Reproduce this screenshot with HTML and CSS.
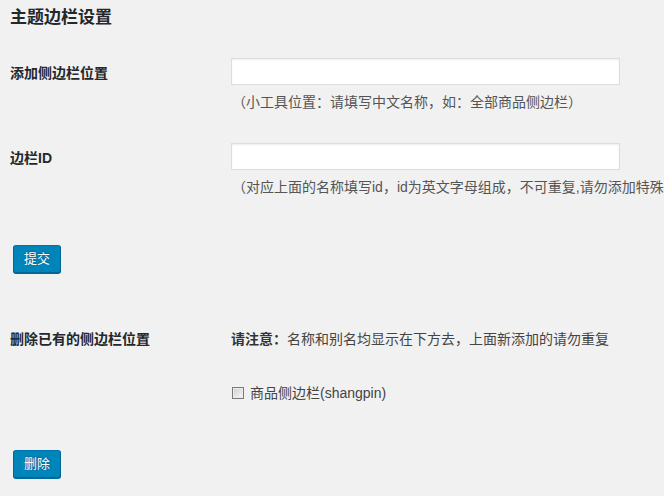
FILE: index.html
```html
<!DOCTYPE html>
<html lang="zh-CN">
<head>
<meta charset="utf-8">
<title>主题边栏设置</title>
<link rel="stylesheet" href="styles.css">
</head>
<body>
<div class="wrap">
  <h2 class="title">主题边栏设置</h2>
  <form class="form">
    <div class="row row-first">
      <div class="th">添加侧边栏位置</div>
      <div class="td">
        <input class="text-input" type="text">
        <p class="desc">（小工具位置：请填写中文名称，如：全部商品侧边栏）</p>
      </div>
    </div>
    <div class="row row-second">
      <div class="th">边栏ID</div>
      <div class="td">
        <input class="text-input" type="text">
        <p class="desc">（对应上面的名称填写id，id为英文字母组成，不可重复,请勿添加特殊字符）</p>
      </div>
    </div>
    <div class="submit submit-first"><button type="button" class="btn">提交</button></div>
    <div class="row row-third">
      <div class="th th-plain">删除已有的侧边栏位置</div>
      <div class="td">
        <p class="note"><strong>请注意：</strong>名称和别名均显示在下方去，上面新添加的请勿重复</p>
        <label class="check"><span class="box"></span>商品侧边栏(shangpin)</label>
      </div>
    </div>
    <div class="submit submit-second"><button type="button" class="btn">删除</button></div>
  </form>
</div>
</body>
</html>
```
FILE: styles.css
```css
html, body {
  margin: 0;
  padding: 0;
  background: #f1f1f1;
  overflow: hidden;
}
body {
  width: 664px;
  height: 496px;
  font-family: "Liberation Sans", "Noto Sans CJK SC", sans-serif;
  color: #444;
  font-size: 14px;
}
.wrap {
  padding: 0 0 0 10px;
}
.title {
  margin: 0;
  padding-top: 6px;
  font-size: 17px;
  line-height: 24px;
  font-weight: bold;
  color: #23282d;
}
.row {
  display: grid;
  grid-template-columns: 221px 1fr;
}
.row-first { margin-top: 28px; }
.row-second { margin-top: 31px; }
.row-third { margin-top: 56px; }
.th {
  padding-top: 5px;
  font-size: 14px;
  line-height: 20px;
  font-weight: bold;
  color: #23282d;
}
.th-plain { padding-top: 0; }
.td {
  display: flex;
  flex-direction: column;
  align-items: flex-start;
  min-width: 0;
  overflow: hidden;
}
.text-input {
  display: block;
  box-sizing: border-box;
  width: 389px;
  height: 27px;
  margin: 0;
  border: 1px solid #ddd;
  background: #fff;
  box-shadow: inset 0 1px 2px rgba(0,0,0,.07);
  padding: 0 6px;
}
.desc {
  margin: 7px 0 0 1px;
  font-size: 14px;
  line-height: 20px;
  color: #555;
  white-space: nowrap;
}
.note {
  margin: 0;
  font-size: 14px;
  line-height: 20px;
  color: #444;
  white-space: nowrap;
}
.note strong { color: #333; }
.check {
  display: flex;
  align-items: center;
  margin-top: 34px;
  line-height: 20px;
  font-size: 14px;
  color: #444;
}
.box {
  display: inline-block;
  box-sizing: border-box;
  width: 12px;
  height: 12px;
  margin: 0 6px 0 1px;
  border: 1px solid #7a7a7a;
  background: linear-gradient(135deg, #cfcfcf, #f8f8f8);
  box-shadow: inset 0 0 0 1px #ececec;
}
.submit { padding-left: 3px; }
.submit-first { margin-top: 48px; }
.submit-second { margin-top: 47px; }
.btn {
  display: block;
  box-sizing: border-box;
  height: 28px;
  width: 48px;
  padding: 0;
  font-family: "Liberation Sans", "Noto Sans CJK SC", sans-serif;
  font-size: 13px;
  line-height: 26px;
  color: #fff;
  background: #0085ba;
  border: 1px solid #0073aa;
  border-color: #0073aa #006799 #006799;
  border-radius: 3px;
  box-shadow: 0 1px 0 #006799;
  text-shadow: 0 -1px 1px #006799, 1px 0 1px #006799;
}
```
